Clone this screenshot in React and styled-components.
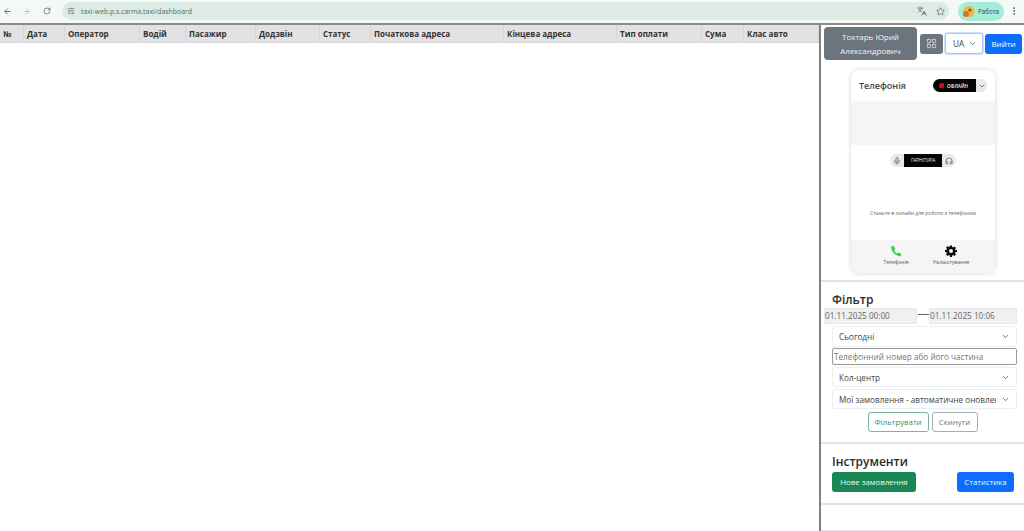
import React from 'react';
import styled, { createGlobalStyle } from 'styled-components';
import { ArrowLeft, ArrowRight, RotateCw, SlidersHorizontal, Languages, Star, EllipsisVertical, ChevronDown, LayoutGrid, Mic, Headphones } from 'lucide-react';

const GlobalStyle = createGlobalStyle`
  html, body { margin: 0; padding: 0; height: 100%; overflow: hidden; background: #fff; }
  body { font-family: "Open Sans", "Noto Sans", sans-serif; color: #333; }
  * { box-sizing: border-box; }
`;

const Page = styled.div`
  width: 1024px;
  height: 531px;
  display: flex;
  flex-direction: column;
  overflow: hidden;
`;

/* browser chrome */
const BrowserBar = styled.div`
  height: 23px;
  flex: none;
  background: #f4f9f7;
  display: flex;
  align-items: center;
  padding: 0 0 1px 0;
  color: #555;
`;
const NavButton = styled.span`
  width: ${p => p.$w}px;
  display: flex;
  justify-content: center;
  color: ${p => (p.$dim ? '#a9b3af' : '#4a5552')};
`;
const Omnibox = styled.div`
  width: 888px;
  height: 18px;
  margin-left: 6px;
  border-radius: 9px;
  background: #dcebe4;
  display: flex;
  align-items: center;
  padding: 0 4px 0 5px;
  gap: 6px;
  font-size: 6.9px;
  color: #5f6a66;
`;
const UrlText = styled.span`
  flex: 1;
  white-space: nowrap;
`;
const OmniIcon = styled.span`
  display: flex;
  margin-left: ${p => p.$ml || 0}px;
`;
const ProfileChip = styled.div`
  margin-left: 9px;
  width: 46px;
  height: 19px;
  border-radius: 10px;
  background: #a5ecd9;
  display: flex;
  align-items: center;
  gap: 3px;
  padding-left: 4px;
  font-size: 6.2px;
  color: #2f4a43;
`;
const ChipAvatar = styled.svg`
  flex: none;
`;

const Body = styled.div`
  flex: 1;
  display: flex;
  min-height: 0;
  border-top: 2px solid #8a8a8a;
`;

/* orders table */
const Main = styled.div`
  width: 821px;
  flex: none;
  border-right: 2px solid #808080;
`;
const TableHead = styled.div`
  display: grid;
  grid-template-columns: 24px 41px 75px 46px 70px 64px 51px 133px 113px 85px 42px 1fr;
  height: 18px;
  background: #e2e1e3;
  border-bottom: 1px solid #d8d8d8;
`;
const HeadCell = styled.div`
  font-size: 8px;
  font-weight: 700;
  color: #333;
  line-height: 17px;
  padding-left: 3px;
  border-right: 1px solid #d6d6d6;
  white-space: nowrap;
`;

/* right column */
const Side = styled.div`
  width: 203px;
  flex: none;
  padding-top: 2px;
  display: flex;
  flex-direction: column;
  border-bottom: 1px solid #e2e2e2;
`;
const UserRow = styled.div`
  display: flex;
  align-items: center;
  padding-left: 3px;
`;
const UserButton = styled.div`
  width: 93px;
  height: 33px;
  border-radius: 4px;
  background: #6c757d;
  color: #f3f3f3;
  font-size: 8px;
  line-height: 14px;
  text-align: center;
  padding-top: 3px;
`;
const GridButton = styled.div`
  width: 23px;
  height: 20px;
  margin-left: 3px;
  border-radius: 3px;
  background: #6c757d;
  color: #eee;
  display: flex;
  align-items: center;
  justify-content: center;
`;
const LangSelect = styled.div`
  width: 38px;
  height: 21px;
  margin-left: 2px;
  border: 1px solid #a9c6f5;
  box-shadow: 0 0 0 1px #d3e2fb;
  border-radius: 3px;
  background: #fff;
  display: flex;
  align-items: center;
  justify-content: space-between;
  padding: 0 5px 0 7px;
  font-size: 8.2px;
  color: #444;
`;
const LoginButton = styled.div`
  width: 37px;
  height: 20px;
  margin-left: 2px;
  border-radius: 3px;
  background: #0d6efd;
  color: #fff;
  font-size: 8px;
  font-weight: 500;
  line-height: 20px;
  text-align: center;
`;

const PhoneCard = styled.div`
  width: 144px;
  height: 203px;
  margin: 10px 0 0 30px;
  border-radius: 8px;
  background: #fff;
  box-shadow: 0 0 5px rgba(0, 0, 0, 0.18);
  display: flex;
  flex-direction: column;
  overflow: hidden;
`;
const PhoneHead = styled.div`
  height: 31px;
  flex: none;
  display: flex;
  align-items: center;
  padding: 0 8px 0 8px;
  font-size: 9px;
  font-weight: 600;
  color: #444;
`;
const PhoneTitle = styled.span`
  flex: 1;
`;
const StatusPill = styled.span`
  width: 43px;
  height: 13px;
  border-radius: 7px 0 0 7px;
  background: #050505;
  color: #ddd;
  font-size: 4.5px;
  font-weight: 700;
  display: flex;
  align-items: center;
  gap: 3px;
  padding-left: 6px;
`;
const StatusDot = styled.span`
  width: 5px;
  height: 5px;
  border-radius: 3px 1px 1px 1px;
  background: #d40d12;
`;
const StatusCaret = styled.span`
  width: 11px;
  height: 13px;
  border-radius: 0 6px 6px 0;
  background: #e8e8e8;
  display: flex;
  align-items: center;
  justify-content: center;
  color: #444;
`;
const GreyPanel = styled.div`
  height: 44px;
  flex: none;
  background: #f6f5f6;
`;
const PhoneBody = styled.div`
  flex: 1;
  display: flex;
  flex-direction: column;
  align-items: center;
`;
const DevicePicker = styled.div`
  margin-top: 9px;
  height: 13px;
  display: flex;
  align-items: stretch;
`;
const DeviceIcon = styled.span`
  width: 14px;
  background: #e9e9e9;
  border-radius: ${p => (p.$right ? '0 7px 7px 0' : '7px 0 0 7px')};
  display: flex;
  align-items: center;
  justify-content: center;
  color: #555;
`;
const DeviceLabel = styled.span`
  width: 38px;
  background: #050505;
  color: #eee;
  font-size: 4.7px;
  text-align: center;
  line-height: 13px;
`;
const PhoneHint = styled.div`
  margin-top: 43px;
  font-size: 5.1px;
  color: #666;
`;
const PhoneTabs = styled.div`
  height: 33px;
  flex: none;
  background: #f6f5f6;
  display: flex;
  padding: 5px 26px 0 32px;
  justify-content: space-between;
`;
const PhoneTab = styled.div`
  display: flex;
  flex-direction: column;
  align-items: center;
  gap: 2px;
  font-size: 5px;
  color: #555;
  width: ${p => p.$w}px;
`;

const Divider = styled.hr`
  width: 100%;
  margin: ${p => p.$m};
  border: 0;
  height: 2px;
  background: #e3e3e3;
  flex: none;
`;
const SectionTitle = styled.h2`
  margin: ${p => p.$m};
  font-size: 12px;
  line-height: 16px;
  font-weight: 600;
  color: #2b2b2b;
`;
const DateRow = styled.div`
  display: flex;
  align-items: center;
  padding-left: 3px;
`;
const DateInput = styled.div`
  width: ${p => p.$w}px;
  height: 16px;
  background: #f0f0f0;
  border: 1px solid #e8e8e8;
  font-size: 8.2px;
  line-height: 14px;
  color: #666;
  padding-left: 0;
`;
const Dash = styled.span`
  width: 11px;
  height: 1px;
  background: #666;
  margin: -3px 0 0 1px;
`;
const FilterStack = styled.div`
  display: flex;
  flex-direction: column;
  margin: 2px 0 0 11px;
  width: 185px;
`;
const SelectBox = styled.div`
  height: ${p => p.$h}px;
  margin-top: ${p => p.$mt || 0}px;
  border: 1px solid #eceff1;
  border-radius: 3px;
  background: #fff;
  display: flex;
  align-items: center;
  gap: 5px;
  padding: 0 6px 0 6px;
  font-size: 8.2px;
  color: #444;
  overflow: hidden;
`;
const SelectText = styled.span`
  flex: 1;
  white-space: nowrap;
  overflow: hidden;
`;
const PhoneInput = styled.div`
  height: 17px;
  margin-top: 1px;
  border: 1px solid #999;
  border-radius: 2px;
  font-size: 8.2px;
  line-height: 15px;
  padding-left: 1px;
  color: #777;
  white-space: nowrap;
`;
const FilterActions = styled.div`
  display: flex;
  justify-content: center;
  gap: 3px;
  margin: 3px 0 0 9px;
  width: 185px;
`;
const OutlineButton = styled.div`
  width: ${p => p.$w}px;
  height: 20px;
  border: 1px solid ${p => p.$color};
  border-radius: 3px;
  color: ${p => p.$text};
  font-size: 7.8px;
  line-height: 18px;
  text-align: center;
`;
const ToolRow = styled.div`
  display: flex;
  justify-content: space-between;
  margin: 0 10px 0 11px;
`;
const ToolButton = styled.div`
  width: ${p => p.$w}px;
  height: 20px;
  border-radius: 3px;
  background: ${p => p.$bg};
  color: #f2f7f5;
  font-size: 7.8px;
  line-height: 20px;
  text-align: center;
`;

const columns = ['№', 'Дата', 'Оператор', 'Водій', 'Пасажир', 'Додзвін', 'Статус', 'Початкова адреса', 'Кінцева адреса', 'Тип оплати', 'Сума', 'Клас авто'];

const PhoneIcon = () => (
  <svg width="12" height="12" viewBox="0 0 24 24" fill="#2fd24a">
    <path d="M6.6 1.5 2.5 3.2C1.6 10 7.5 21 20.8 22.6l2-4.8-6-3-2.4 2.4c-2.6-1.3-5.4-4.6-6.2-7.4l2.6-2z" />
  </svg>
);

const GearIcon = () => (
  <svg width="12" height="12" viewBox="0 0 24 24" fill="#0b0b0b">
    <path fillRule="evenodd" d="M10 1h4l.6 3.2 1.9.8 2.7-1.8 2.8 2.8-1.8 2.7.8 1.9L24 10v4l-3.2.6-.8 1.9 1.8 2.7-2.8 2.8-2.7-1.8-1.9.8L14 24h-4l-.6-3.2-1.9-.8-2.7 1.8-2.8-2.8 1.8-2.7-.8-1.9L0 14v-4l3.2-.6.8-1.9-1.8-2.7 2.8-2.8 2.7 1.8 1.9-.8zM12 8a4 4 0 1 0 0 8 4 4 0 0 0 0-8z" />
  </svg>
);

const AvatarIcon = () => (
  <ChipAvatar width="13" height="13" viewBox="0 0 13 13">
    <circle cx="7" cy="6.5" r="5.5" fill="#f0b63c" />
    <circle cx="4" cy="9" r="3" fill="#c8782a" />
    <circle cx="8" cy="5" r="1.6" fill="#7a5a2e" />
  </ChipAvatar>
);

export default function App() {
  return (
    <Page>
      <GlobalStyle />
      <BrowserBar>
        <NavButton $w={16}><ArrowLeft size={9} /></NavButton>
        <NavButton $w={22} $dim><ArrowRight size={9} /></NavButton>
        <NavButton $w={18}><RotateCw size={8} /></NavButton>
        <Omnibox>
          <SlidersHorizontal size={8} />
          <UrlText>taxi-web.p.s.carma.taxi/dashboard</UrlText>
          <OmniIcon><Languages size={10} /></OmniIcon>
          <OmniIcon $ml={3}><Star size={9} /></OmniIcon>
        </Omnibox>
        <ProfileChip><AvatarIcon />Работа</ProfileChip>
        <NavButton $w={20}><EllipsisVertical size={10} /></NavButton>
      </BrowserBar>
      <Body>
        <Main>
          <TableHead>
            {columns.map(c => <HeadCell key={c}>{c}</HeadCell>)}
          </TableHead>
        </Main>
        <Side>
          <UserRow>
            <UserButton>Тохтарь Юрий<br />Александрович</UserButton>
            <GridButton><LayoutGrid size={11} strokeWidth={1.5} /></GridButton>
            <LangSelect>UA<ChevronDown size={9} /></LangSelect>
            <LoginButton>Вийти</LoginButton>
          </UserRow>
          <PhoneCard>
            <PhoneHead>
              <PhoneTitle>Телефонія</PhoneTitle>
              <StatusPill><StatusDot />ОФЛАЙН</StatusPill>
              <StatusCaret><ChevronDown size={8} /></StatusCaret>
            </PhoneHead>
            <GreyPanel />
            <PhoneBody>
              <DevicePicker>
                <DeviceIcon><Mic size={8} /></DeviceIcon>
                <DeviceLabel>ГАРНІТУРА</DeviceLabel>
                <DeviceIcon $right><Headphones size={8} /></DeviceIcon>
              </DevicePicker>
              <PhoneHint>Станьте в онлайн для роботи з телефоном</PhoneHint>
            </PhoneBody>
            <PhoneTabs>
              <PhoneTab $w={26}><PhoneIcon />Телефонія</PhoneTab>
              <PhoneTab $w={36}><GearIcon />Налаштування</PhoneTab>
            </PhoneTabs>
          </PhoneCard>
          <Divider $m="7px 0 0" />
          <SectionTitle $m="10px 0 0 11px">Фільтр</SectionTitle>
          <DateRow>
            <DateInput $w={93}>01.11.2025 00:00</DateInput>
            <Dash />
            <DateInput $w={88}>01.11.2025 10:06</DateInput>
          </DateRow>
          <FilterStack>
            <SelectBox $h={21}><SelectText>Сьогодні</SelectText><ChevronDown size={9} /></SelectBox>
            <PhoneInput>Телефонний номер або його частина</PhoneInput>
            <SelectBox $h={20} $mt={2}><SelectText>Кол-центр</SelectText><ChevronDown size={9} /></SelectBox>
            <SelectBox $h={20} $mt={2}><SelectText>Мої замовлення - автоматичне оновлення</SelectText><ChevronDown size={9} /></SelectBox>
          </FilterStack>
          <FilterActions>
            <OutlineButton $w={61} $color="#7fb5a0" $text="#3f8a6c">Фільтрувати</OutlineButton>
            <OutlineButton $w={46} $color="#a8adb1" $text="#6c757d">Скинути</OutlineButton>
          </FilterActions>
          <Divider $m="10px 0 0" />
          <SectionTitle $m="10px 0 2px 11px">Інструменти</SectionTitle>
          <ToolRow>
            <ToolButton $w={84} $bg="#198754">Нове замовлення</ToolButton>
            <ToolButton $w={57} $bg="#0d6efd">Статистика</ToolButton>
          </ToolRow>
          <Divider $m="11px 0 0" />
        </Side>
      </Body>
    </Page>
  );
}
